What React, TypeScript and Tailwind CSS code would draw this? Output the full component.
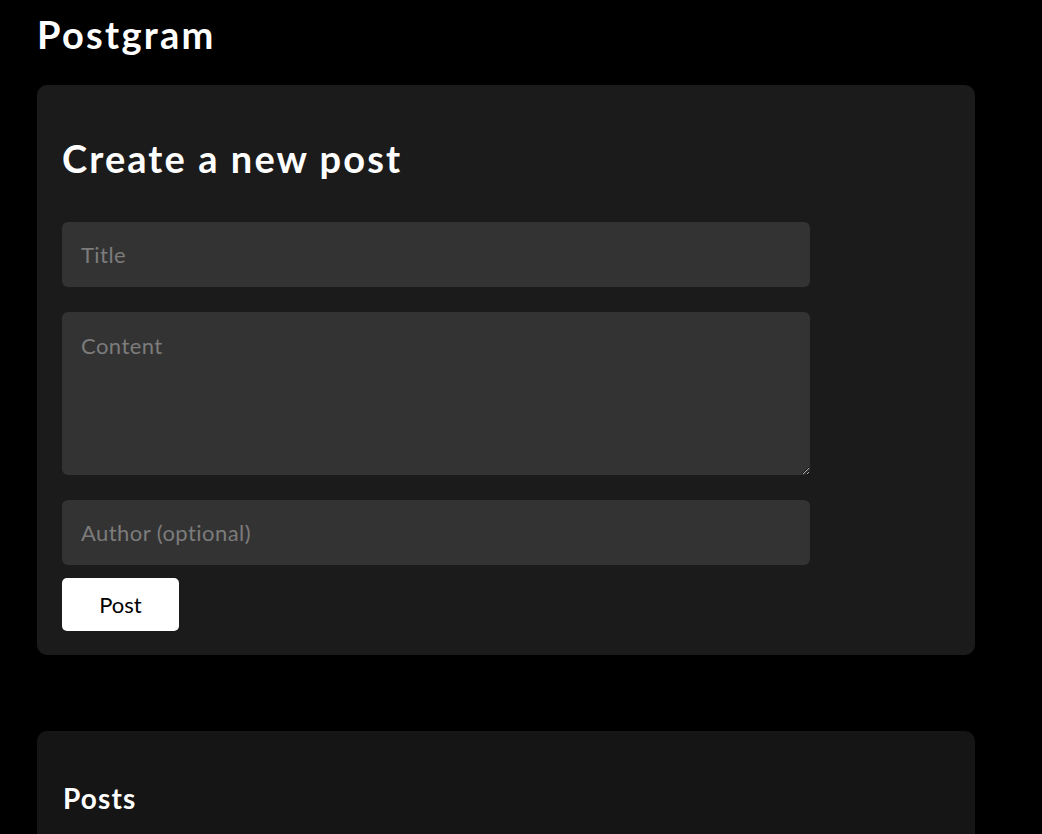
export default function App() {
  const font = { fontFamily: "Lato, 'Open Sans', sans-serif" };
  const field =
    "w-[748px] rounded-[6px] bg-[#333333] px-[19px] text-[22px] tracking-[0.02em] text-white outline-none placeholder:text-[#7c7c7c]";
  return (
    <div className="min-h-screen bg-black px-[37px] pb-10 text-white" style={font}>
      <h1 className="pt-[12px] text-[38px] font-bold leading-[1.2] tracking-[0.06em] text-white">Postgram</h1>
      <div className="mt-[27px] w-[938px] rounded-[10px] bg-[#1b1b1b] px-[25px] pt-[26px] pb-[24px]">
        <h2 className="mt-[25px] text-[38px] font-bold leading-[1.2] tracking-[0.055em] text-white">
          Create a new post
        </h2>
        <form className="mt-[41px] flex flex-col" onSubmit={(e) => e.preventDefault()}>
          <input placeholder="Title" className={`h-[65px] ${field}`} />
          <textarea placeholder="Content" className={`mt-[25px] block h-[163px] pt-[17px] ${field}`} />
          <input placeholder="Author (optional)" className={`mt-[25px] h-[65px] ${field}`} />
          <button
            type="submit"
            className="mt-[13px] h-[53px] w-[117px] rounded-[5px] bg-white text-[22px] text-black"
          >
            Post
          </button>
        </form>
      </div>
      <div className="mt-[76px] h-[200px] w-[938px] rounded-[10px] bg-[#151515] px-[26px] pt-[51px]">
        <h2 className="text-[28px] font-bold leading-[1.2] tracking-[0.04em] text-white">Posts</h2>
      </div>
    </div>
  );
}
